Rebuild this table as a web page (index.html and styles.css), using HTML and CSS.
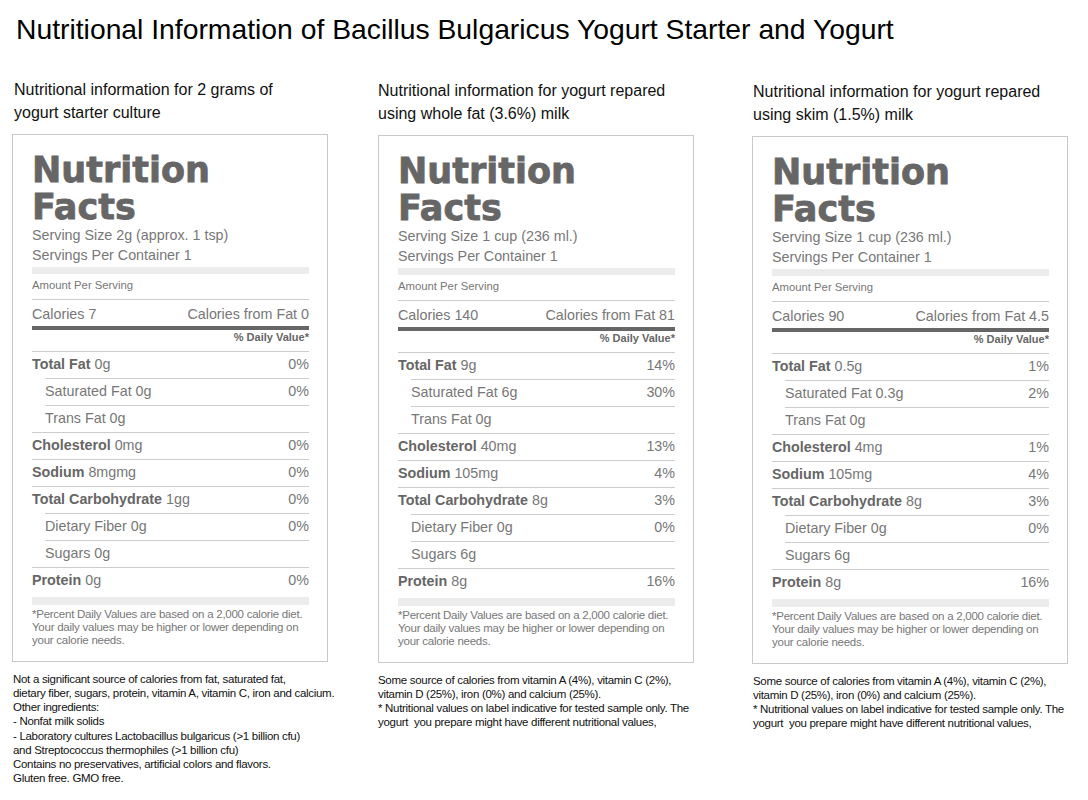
FILE: index.html
```html
<!DOCTYPE html>
<html lang="en">
<head>
<meta charset="utf-8">
<title>Nutritional Information</title>
<link rel="stylesheet" href="styles.css">
</head>
<body>
<div class="page">
  <h1 class="title">Nutritional Information of Bacillus Bulgaricus Yogurt Starter and Yogurt</h1>
  <div class="columns">
    <section class="col col-1">
      <p class="col-head">Nutritional information for 2 grams of<br>yogurt starter culture</p>
      <div class="label">
        <h2 class="nf-title">Nutrition<br>Facts</h2>
        <p class="serving">Serving Size 2g (approx. 1 tsp)</p>
        <p class="serving">Servings Per Container 1</p>
        <div class="bar"></div>
        <p class="amount">Amount Per Serving</p>
        <div class="calories"><span>Calories 7</span><span>Calories from Fat 0</span></div>
        <p class="dv">% Daily Value*</p>
        <div class="row"><span><b>Total Fat</b> 0g</span><span>0%</span></div>
        <div class="row sub"><span>Saturated Fat 0g</span><span>0%</span></div>
        <div class="row sub"><span>Trans Fat 0g</span><span></span></div>
        <div class="row"><span><b>Cholesterol</b> 0mg</span><span>0%</span></div>
        <div class="row"><span><b>Sodium</b> 8mgmg</span><span>0%</span></div>
        <div class="row"><span><b>Total Carbohydrate</b> 1gg</span><span>0%</span></div>
        <div class="row sub"><span>Dietary Fiber 0g</span><span>0%</span></div>
        <div class="row sub"><span>Sugars 0g</span><span></span></div>
        <div class="row"><span><b>Protein</b> 0g</span><span>0%</span></div>
        <div class="bar bar-bottom"></div>
        <p class="footnote">*Percent Daily Values are based on a 2,000 calorie diet.<br>Your daily values may be higher or lower depending on<br>your calorie needs.</p>
      </div>
      <p class="notes">Not a significant source of calories from fat, saturated fat,<br>dietary fiber, sugars, protein, vitamin A, vitamin C, iron and calcium.<br>Other ingredients:<br>- Nonfat milk solids<br>- Laboratory cultures Lactobacillus bulgaricus (&gt;1 billion cfu)<br>and Streptococcus thermophiles (&gt;1 billion cfu)<br>Contains no preservatives, artificial colors and flavors.<br>Gluten free. GMO free.</p>
    </section>

    <section class="col col-2">
      <p class="col-head">Nutritional information for yogurt repared<br>using whole fat (3.6%) milk</p>
      <div class="label">
        <h2 class="nf-title">Nutrition<br>Facts</h2>
        <p class="serving">Serving Size 1 cup (236 ml.)</p>
        <p class="serving">Servings Per Container 1</p>
        <div class="bar"></div>
        <p class="amount">Amount Per Serving</p>
        <div class="calories"><span>Calories 140</span><span>Calories from Fat 81</span></div>
        <p class="dv">% Daily Value*</p>
        <div class="row"><span><b>Total Fat</b> 9g</span><span>14%</span></div>
        <div class="row sub"><span>Saturated Fat 6g</span><span>30%</span></div>
        <div class="row sub"><span>Trans Fat 0g</span><span></span></div>
        <div class="row"><span><b>Cholesterol</b> 40mg</span><span>13%</span></div>
        <div class="row"><span><b>Sodium</b> 105mg</span><span>4%</span></div>
        <div class="row"><span><b>Total Carbohydrate</b> 8g</span><span>3%</span></div>
        <div class="row sub"><span>Dietary Fiber 0g</span><span>0%</span></div>
        <div class="row sub"><span>Sugars 6g</span><span></span></div>
        <div class="row"><span><b>Protein</b> 8g</span><span>16%</span></div>
        <div class="bar bar-bottom"></div>
        <p class="footnote">*Percent Daily Values are based on a 2,000 calorie diet.<br>Your daily values may be higher or lower depending on<br>your calorie needs.</p>
      </div>
      <p class="notes">Some source of calories from vitamin A (4%), vitamin C (2%),<br>vitamin D (25%), iron (0%) and calcium (25%).<br>* Nutritional values on label indicative for tested sample only. The<br>yogurt&nbsp; you prepare might have different nutritional values,</p>
    </section>

    <section class="col col-3">
      <p class="col-head">Nutritional information for yogurt repared<br>using skim (1.5%) milk</p>
      <div class="label">
        <h2 class="nf-title">Nutrition<br>Facts</h2>
        <p class="serving">Serving Size 1 cup (236 ml.)</p>
        <p class="serving">Servings Per Container 1</p>
        <div class="bar"></div>
        <p class="amount">Amount Per Serving</p>
        <div class="calories"><span>Calories 90</span><span>Calories from Fat 4.5</span></div>
        <p class="dv">% Daily Value*</p>
        <div class="row"><span><b>Total Fat</b> 0.5g</span><span>1%</span></div>
        <div class="row sub"><span>Saturated Fat 0.3g</span><span>2%</span></div>
        <div class="row sub"><span>Trans Fat 0g</span><span></span></div>
        <div class="row"><span><b>Cholesterol</b> 4mg</span><span>1%</span></div>
        <div class="row"><span><b>Sodium</b> 105mg</span><span>4%</span></div>
        <div class="row"><span><b>Total Carbohydrate</b> 8g</span><span>3%</span></div>
        <div class="row sub"><span>Dietary Fiber 0g</span><span>0%</span></div>
        <div class="row sub"><span>Sugars 6g</span><span></span></div>
        <div class="row"><span><b>Protein</b> 8g</span><span>16%</span></div>
        <div class="bar bar-bottom"></div>
        <p class="footnote">*Percent Daily Values are based on a 2,000 calorie diet.<br>Your daily values may be higher or lower depending on<br>your calorie needs.</p>
      </div>
      <p class="notes">Some source of calories from vitamin A (4%), vitamin C (2%),<br>vitamin D (25%), iron (0%) and calcium (25%).<br>* Nutritional values on label indicative for tested sample only. The<br>yogurt&nbsp; you prepare might have different nutritional values,</p>
    </section>
  </div>
</div>
</body>
</html>
```

FILE: styles.css
```css
* { box-sizing: border-box; }
html, body { margin: 0; padding: 0; background: #fff; }
body {
  font-family: "Liberation Sans", Arial, sans-serif;
  color: #000;
}
p, h1, h2 { margin: 0; font-weight: normal; }

.page {
  padding: 11px 0 0 12px;
}

.title {
  font-size: 28.3px;
  line-height: 32px;
  padding: 2px 0 0 4px;
  color: #000;
  white-space: nowrap;
}

.columns {
  display: grid;
  grid-template-columns: 366px 374px 316px;
  margin-top: 33px;
}

.col-2 { padding-top: 1px; }
.col-3 { padding-top: 2px; }

.col-head {
  font-size: 16px;
  line-height: 23px;
  color: #111;
  height: 56px;
  white-space: nowrap;
}
.col-1 .col-head { padding-left: 2px; }
.col-3 .col-head { padding-left: 1px; }

.label {
  width: 316px;
  border: 1px solid #c9c9c9;
  padding: 17px 18px 14px 19px;
  color: #777;
}

.nf-title {
  font-family: "DejaVu Sans", sans-serif;
  font-weight: bold;
  font-size: 35px;
  line-height: 37px;
  color: #666;
  -webkit-text-stroke: 0.8px #666;
  margin-bottom: -1px;
}

.serving {
  font-size: 14.3px;
  line-height: 20px;
}

.bar {
  height: 7px;
  background: #ececec;
  margin-top: 2px;
}
.bar-bottom {
  height: 8px;
  margin-top: 3px;
}

.amount {
  font-size: 11.3px;
  line-height: 16px;
  padding: 3px 0 6px;
  border-bottom: 1px solid #ccc;
}

.calories {
  display: flex;
  justify-content: space-between;
  font-size: 14.3px;
  line-height: 20px;
  padding: 4px 0 2px;
  border-bottom: 4px solid #666;
}

.dv {
  font-size: 11px;
  line-height: 14px;
  font-weight: bold;
  text-align: right;
  color: #666;
  padding-bottom: 7px;
}

.row {
  display: flex;
  justify-content: space-between;
  font-size: 14.3px;
  line-height: 20px;
  padding: 2px 0 4px;
  border-top: 1px solid #ccc;
}
.row.sub { margin-left: 13px; }
.row b { color: #666; font-weight: bold; }

.footnote {
  font-size: 11.5px;
  letter-spacing: -0.25px;
  line-height: 13px;
  margin-top: 3px;
  white-space: nowrap;
}

.notes {
  font-size: 11.5px;
  letter-spacing: -0.3px;
  line-height: 14.15px;
  color: #111;
  margin-top: 10px;
  white-space: nowrap;
}
.col-1 .notes { padding-left: 1px; }
.col-3 .notes { padding-left: 1px; }
```
